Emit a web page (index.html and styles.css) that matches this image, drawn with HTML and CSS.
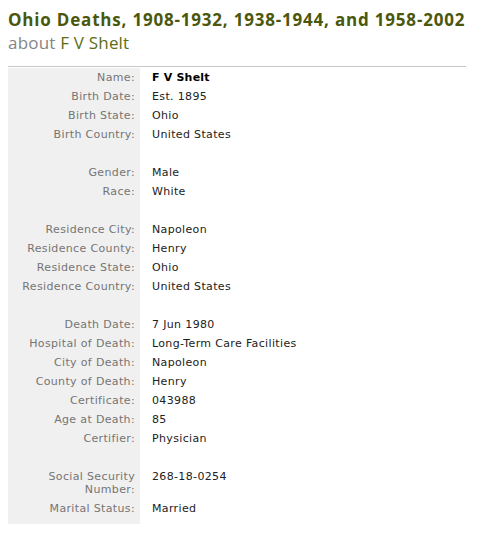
FILE: index.html
```html
<!DOCTYPE html>
<html>
<head>
<meta charset="utf-8">
<link rel="stylesheet" href="styles.css">
</head>
<body>
<div class="page">
  <h1 class="title">Ohio Deaths, 1908-1932, 1938-1944, and 1958-2002</h1>
  <h2 class="subtitle">about <span class="who">F V Shelt</span></h2>
  <div class="record">
    <div class="row"><div class="lbl">Name:</div><div class="val strong">F V Shelt</div></div>
    <div class="row"><div class="lbl">Birth Date:</div><div class="val">Est. 1895</div></div>
    <div class="row"><div class="lbl">Birth State:</div><div class="val">Ohio</div></div>
    <div class="row"><div class="lbl">Birth Country:</div><div class="val">United States</div></div>
    <div class="row gap"><div class="lbl"></div><div class="val"></div></div>
    <div class="row"><div class="lbl">Gender:</div><div class="val">Male</div></div>
    <div class="row"><div class="lbl">Race:</div><div class="val">White</div></div>
    <div class="row gap"><div class="lbl"></div><div class="val"></div></div>
    <div class="row"><div class="lbl">Residence City:</div><div class="val">Napoleon</div></div>
    <div class="row"><div class="lbl">Residence County:</div><div class="val">Henry</div></div>
    <div class="row"><div class="lbl">Residence State:</div><div class="val">Ohio</div></div>
    <div class="row"><div class="lbl">Residence Country:</div><div class="val">United States</div></div>
    <div class="row gap"><div class="lbl"></div><div class="val"></div></div>
    <div class="row"><div class="lbl">Death Date:</div><div class="val">7 Jun 1980</div></div>
    <div class="row"><div class="lbl">Hospital of Death:</div><div class="val">Long-Term Care Facilities</div></div>
    <div class="row"><div class="lbl">City of Death:</div><div class="val">Napoleon</div></div>
    <div class="row"><div class="lbl">County of Death:</div><div class="val">Henry</div></div>
    <div class="row"><div class="lbl">Certificate:</div><div class="val">043988</div></div>
    <div class="row"><div class="lbl">Age at Death:</div><div class="val">85</div></div>
    <div class="row"><div class="lbl">Certifier:</div><div class="val">Physician</div></div>
    <div class="row gap"><div class="lbl"></div><div class="val"></div></div>
    <div class="row"><div class="lbl">Social Security Number:</div><div class="val">268-18-0254</div></div>
    <div class="row"><div class="lbl">Marital Status:</div><div class="val">Married</div></div>
    <div class="row tail"><div class="lbl"></div><div class="val"></div></div>
  </div>
</div>
</body>
</html>
```

FILE: styles.css
```css
html, body {
  margin: 0;
  padding: 0;
  background: #ffffff;
}
.page {
  padding: 8px 13px 0 8px;
  font-family: "DejaVu Sans", Verdana, sans-serif;
}
.title {
  margin: 0;
  font-family: "Open Sans", "Liberation Sans", sans-serif;
  font-weight: 700;
  font-size: 17px;
  line-height: 23px;
  letter-spacing: 0.8px;
  color: #4b570c;
  white-space: nowrap;
}
.subtitle {
  margin: 0;
  font-family: "Open Sans", "Liberation Sans", sans-serif;
  font-weight: 400;
  font-size: 17px;
  line-height: 23px;
  letter-spacing: 0.2px;
  color: #858585;
}
.who {
  color: #5c6d14;
}
.record {
  margin-top: 12px;
  border-top: 1px solid #c8c8c8;
  padding-top: 1px;
  width: 458px;
}
.row {
  display: grid;
  grid-template-columns: 132px 1fr;
}
.lbl {
  background: #f0f0f0;
  color: #757575;
  text-align: right;
  padding: 3px 5px 3px 4px;
  font-size: 11px;
  line-height: 13px;
  letter-spacing: 0.35px;
  min-height: 13px;
}
.val {
  color: #222222;
  padding: 3px 0 3px 12px;
  font-size: 11px;
  line-height: 13px;
  letter-spacing: 0.35px;
}
.strong {
  font-weight: 700;
  color: #000;
  letter-spacing: 0.2px;
}
.tail .lbl {
  padding: 0;
  min-height: 6px;
}
.tail .val {
  padding: 0;
}
```
